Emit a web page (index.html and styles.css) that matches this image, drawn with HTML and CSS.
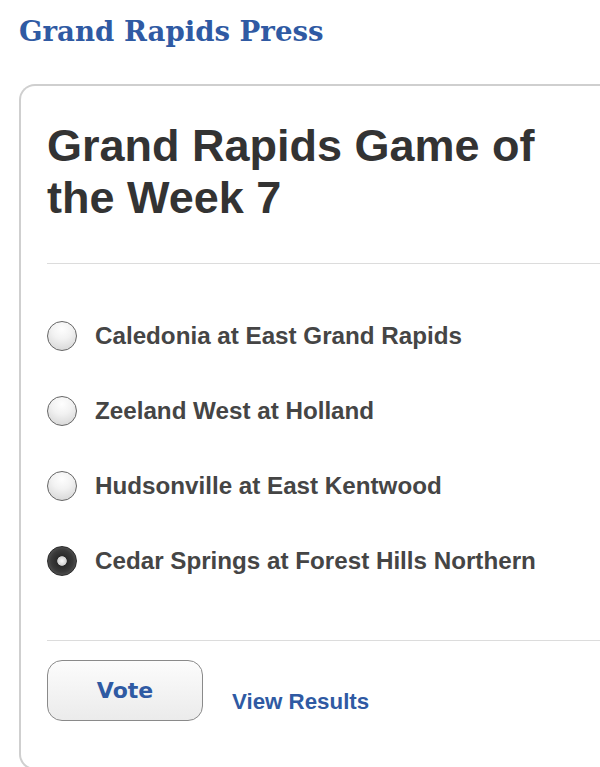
FILE: index.html
```html
<!DOCTYPE html>
<html>
<head>
<meta charset="utf-8">
<link rel="stylesheet" href="styles.css">
</head>
<body>
<div class="page">
  <div class="brand">Grand Rapids Press</div>
  <div class="card">
    <h1 class="title">Grand Rapids Game of the Week 7</h1>
    <div class="rule"></div>
    <ul class="options">
      <li class="option"><span class="radio"></span><span class="label">Caledonia at East Grand Rapids</span></li>
      <li class="option"><span class="radio"></span><span class="label">Zeeland West at Holland</span></li>
      <li class="option"><span class="radio"></span><span class="label">Hudsonville at East Kentwood</span></li>
      <li class="option"><span class="radio checked"></span><span class="label">Cedar Springs at Forest Hills Northern</span></li>
    </ul>
    <div class="rule rule-bottom"></div>
    <div class="actions">
      <button class="vote">Vote</button>
      <a class="results">View Results</a>
    </div>
  </div>
</div>
</body>
</html>
```
FILE: styles.css
```css
html, body { margin: 0; padding: 0; background: #fff; }
body { width: 600px; height: 767px; overflow: hidden; }
.page { padding: 14px 0 0 19px; }
.brand {
  font-family: "DejaVu Serif", Georgia, serif;
  font-weight: bold;
  font-size: 27.6px;
  color: #2f5aa3;
  line-height: 36px;
}
.card {
  margin-top: 34px;
  border: 2px solid #cfcfcf;
  border-right: none;
  border-radius: 16px 0 0 16px;
  padding: 0 0 0 26px;
  height: 686px;
  box-sizing: border-box;
}
.title {
  margin: 0;
  padding: 34px 40px 0 0;
  font-family: "Liberation Sans", Arial, sans-serif;
  font-weight: bold;
  font-size: 45px;
  line-height: 52px;
  color: #333;
}
.rule { height: 1px; background: #dcdcdc; margin-top: 39px; }
.rule-bottom { margin-top: 42px; }
.options { list-style: none; margin: 0; padding: 34px 0 0 0; }
.option { display: flex; align-items: center; height: 75px; }
.radio {
  width: 28px; height: 28px;
  border-radius: 50%;
  border: 1px solid #666;
  background: radial-gradient(circle at 50% 25%, #fefefe 0%, #f2f2f2 40%, #d0d0d0 100%);
  margin-left: 0;
  margin-right: 18px;
  flex: none;
}
.radio.checked {
  background: radial-gradient(circle at 50% 50%, #fafafa 0%, #d0d0d0 22%, #2a2a2a 26%, #3a3a3a 55%, #707070 100%);
  border-color: #2a2a2a;
}
.label {
  font-family: "Liberation Sans", Arial, sans-serif;
  font-weight: bold;
  font-size: 24.2px;
  color: #454545;
}
.actions { display: flex; align-items: flex-start; padding-top: 19px; }
.vote {
  width: 156px; height: 61px;
  border: 1.5px solid #8a8a8a;
  border-radius: 15px;
  background: linear-gradient(#fcfcfc, #ebebeb);
  font-family: "DejaVu Sans", Verdana, sans-serif;
  font-weight: bold;
  font-size: 22px;
  color: #2f5aa3;
  padding: 0;
}
.results {
  margin: 29px 0 0 29px;
  font-family: "Liberation Sans", Arial, sans-serif;
  font-weight: bold;
  font-size: 22.3px;
  color: #2f5aa3;
}
```
